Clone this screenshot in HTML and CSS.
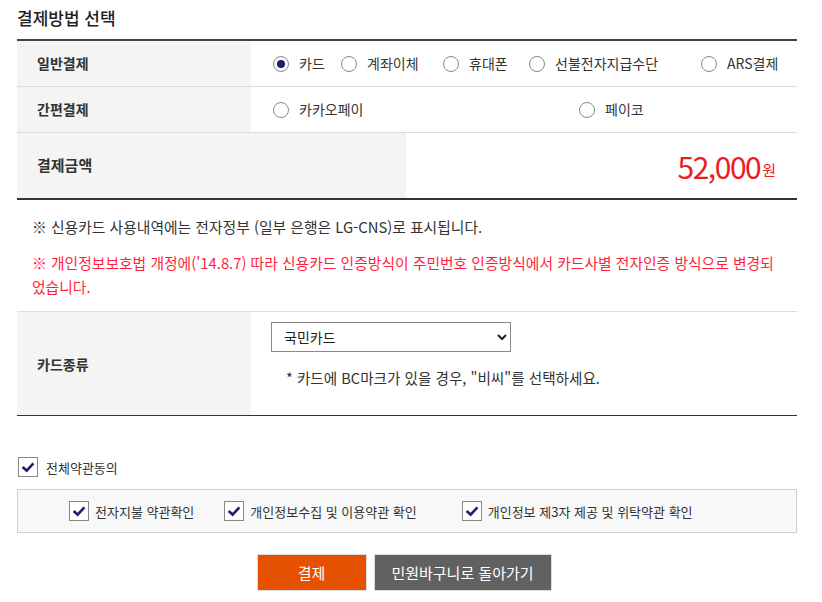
FILE: index.html
```html
<!DOCTYPE html>
<html lang="ko">
<head>
    <meta charset="UTF-8">
    <meta name="viewport" content="width=device-width, initial-scale=1.0">
    <title>결제방법 선택</title>
    <link rel="stylesheet" href="styles.css">
</head>
<body>
    <div class="wrap">
        <h2 class="title">결제방법 선택</h2>

        <div class="pay-table">
            <div class="row">
                <div class="label">일반결제</div>
                <div class="value methods">
                    <label class="radio w1"><input type="radio" name="method" checked><span>카드</span></label>
                    <label class="radio w2"><input type="radio" name="method"><span>계좌이체</span></label>
                    <label class="radio w3"><input type="radio" name="method"><span>휴대폰</span></label>
                    <label class="radio w4"><input type="radio" name="method"><span>선불전자지급수단</span></label>
                    <label class="radio"><input type="radio" name="method"><span>ARS결제</span></label>
                </div>
            </div>
            <div class="row">
                <div class="label">간편결제</div>
                <div class="value methods">
                    <label class="radio w5"><input type="radio" name="method"><span>카카오페이</span></label>
                    <label class="radio"><input type="radio" name="method"><span>페이코</span></label>
                </div>
            </div>
            <div class="row total">
                <div class="label">결제금액</div>
                <div class="value amount"><strong>52,000</strong><span>원</span></div>
            </div>
        </div>

        <div class="notes">
            <p>※ 신용카드 사용내역에는 전자정부 (일부 은행은 LG-CNS)로 표시됩니다.</p>
            <p class="warn">※ 개인정보보호법 개정에('14.8.7) 따라 신용카드 인증방식이 주민번호 인증방식에서 카드사별 전자인증 방식으로 변경되었습니다.</p>
        </div>

        <div class="card-table">
            <div class="row">
                <div class="label">카드종류</div>
                <div class="value">
                    <select class="card-select">
                        <option>국민카드</option>
                        <option>비씨</option>
                        <option>신한카드</option>
                        <option>삼성카드</option>
                        <option>현대카드</option>
                    </select>
                    <p class="card-tip">* 카드에 BC마크가 있을 경우, "비씨"를 선택하세요.</p>
                </div>
            </div>
        </div>

        <label class="check all-agree">
            <input type="checkbox" checked>
            <span class="box"><svg viewBox="0 0 20 20" width="20" height="20"><polyline points="4,10 8.5,14 16,6" fill="none" stroke="#1f2470" stroke-width="3"/></svg></span>
            전체약관동의
        </label>

        <div class="agree-box">
            <label class="check a1">
                <input type="checkbox" checked>
                <span class="box"><svg viewBox="0 0 20 20" width="20" height="20"><polyline points="4,10 8.5,14 16,6" fill="none" stroke="#1f2470" stroke-width="3"/></svg></span>
                전자지불 약관확인
            </label>
            <label class="check a2">
                <input type="checkbox" checked>
                <span class="box"><svg viewBox="0 0 20 20" width="20" height="20"><polyline points="4,10 8.5,14 16,6" fill="none" stroke="#1f2470" stroke-width="3"/></svg></span>
                개인정보수집 및 이용약관 확인
            </label>
            <label class="check">
                <input type="checkbox" checked>
                <span class="box"><svg viewBox="0 0 20 20" width="20" height="20"><polyline points="4,10 8.5,14 16,6" fill="none" stroke="#1f2470" stroke-width="3"/></svg></span>
                개인정보 제3자 제공 및 위탁약관 확인
            </label>
        </div>

        <div class="buttons">
            <button class="btn pay">결제</button>
            <button class="btn back">민원바구니로 돌아가기</button>
        </div>
    </div>
</body>
</html>
```

FILE: styles.css
```css
body {
    margin: 0;
    padding: 0;
    font-family: "Noto Sans CJK KR", "Noto Sans", sans-serif;
    font-size: 14px;
    color: #333;
    background-color: #fff;
}
.wrap {
    width: 780px;
    padding: 0 17px;
}
.title {
    margin: 0;
    padding-top: 5px;
    height: 34px;
    font-size: 17px;
    font-weight: 500;
    color: #222;
    line-height: 26px;
}
.pay-table {
    border-top: 2px solid #444;
    border-bottom: 2px solid #333;
}
.row {
    display: flex;
    border-bottom: 1px solid #dcdcdc;
}
.row:last-child {
    border-bottom: none;
}
.label {
    width: 214px;
    padding-left: 20px;
    padding-bottom: 2px;
    box-sizing: content-box;
    background-color: #f4f4f4;
    font-weight: 700;
    font-size: 14px;
    display: flex;
    align-items: center;
    color: #333;
}
.value {
    flex: 1;
    padding-left: 22px;
}
.methods {
    display: flex;
    align-items: center;
    height: 43px;
    padding-bottom: 2px;
}
.radio {
    display: flex;
    align-items: center;
    cursor: pointer;
}
.radio.w1 { width: 68px; }
.radio.w2 { width: 102px; }
.radio.w3 { width: 86px; }
.radio.w4 { width: 172px; }
.radio.w5 { width: 306px; }
.radio input {
    appearance: none;
    -webkit-appearance: none;
    margin: 2px 10px 0 0;
    width: 16px;
    height: 16px;
    border: 1px solid #8a8a8a;
    border-radius: 50%;
    background-color: #fff;
    display: flex;
    align-items: center;
    justify-content: center;
}
.radio input:checked::after {
    content: "";
    width: 8px;
    height: 8px;
    border-radius: 50%;
    background-color: #1c2272;
}
.total {
    height: 65px;
}
.total .label {
    width: 369px;
    font-size: 15px;
}
.amount {
    display: flex;
    align-items: center;
    justify-content: flex-end;
    padding-right: 21px;
    color: #ee1c25;
}
.amount strong {
    font-weight: 400;
    font-size: 30px;
    letter-spacing: -1.5px;
}
.amount span {
    font-size: 15px;
    margin-top: 8px;
    margin-left: 2px;
}
.notes {
    padding: 15px 15px 12px;
    font-size: 14.8px;
}
.notes p {
    margin: 0 0 12px;
    line-height: 24px;
}
.notes p:last-child {
    margin-bottom: 0;
}
.notes .warn {
    color: #ff1f3d;
    padding-right: 4px;
}
.card-table {
    border-top: 1px solid #dcdcdc;
    border-bottom: 1px solid #333;
}
.card-table .row {
    height: 103px;
}
.card-table .label {
    padding-bottom: 0;
}
.card-table .value {
    padding-top: 10px;
    padding-left: 20px;
}
.card-select {
    width: 240px;
    height: 30px;
    border: 1px solid #8a8a8a;
    border-radius: 0;
    padding-left: 8px;
    font-family: inherit;
    font-size: 14px;
    color: #222;
    background-color: #fff;
}
.card-tip {
    margin: 14px 0 0 15px;
    line-height: 24px;
    font-size: 14.6px;
}
.check {
    display: flex;
    align-items: center;
    font-size: 13px;
    cursor: pointer;
}
.check input {
    display: none;
}
.check .box {
    width: 18px;
    height: 18px;
    border: 1px solid #888;
    background-color: #fff;
    margin-right: 6px;
    display: flex;
}
.check .box svg {
    width: 18px;
    height: 18px;
}
.all-agree {
    margin-top: 41px;
    margin-left: 1px;
}
.all-agree .box {
    margin-right: 8px;
}
.agree-box {
    margin-top: 12px;
    height: 42px;
    border: 1px solid #cfcfcf;
    background-color: #f8f8f8;
    display: flex;
    align-items: center;
    padding-left: 51px;
}
.check.a1 { margin-right: 30px; }
.check.a2 { margin-right: 45px; }
.buttons {
    display: flex;
    justify-content: center;
    gap: 7px;
    margin-top: 21px;
    padding-right: 6px;
}
.btn {
    height: 37px;
    border: 1px solid #ddd;
    color: #fff;
    font-family: inherit;
    font-size: 15px;
    cursor: pointer;
}
.btn.pay {
    width: 110px;
    background-color: #e65100;
}
.btn.back {
    width: 178px;
    background-color: #616161;
}
```
